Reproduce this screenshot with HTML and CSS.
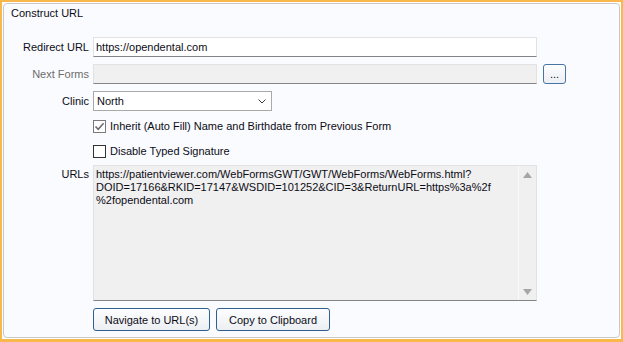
FILE: index.html
```html
<!DOCTYPE html>
<html>
<head>
<meta charset="utf-8">
<link rel="stylesheet" href="styles.css">
</head>
<body>
<div class="frame">
  <div class="panel">
    <div class="title">Construct URL</div>
    <div class="form">
      <div class="row row-redirect">
        <span class="lbl">Redirect URL</span>
        <div class="input">https://opendental.com</div>
      </div>
      <div class="row row-next">
        <span class="lbl lbl-dis">Next Forms</span>
        <div class="input input-dis"></div>
        <button class="btn btn-dots">...</button>
      </div>
      <div class="row row-clinic">
        <span class="lbl">Clinic</span>
        <div class="combo">
          <span class="combo-val">North</span>
          <svg class="chev" width="8" height="5" viewBox="0 0 8 5"><path d="M0.5 0.5 L4 4 L7.5 0.5" fill="none" stroke="#3a3a3a" stroke-width="1"/></svg>
        </div>
      </div>
      <div class="row row-check1">
        <span class="lbl"></span>
        <span class="box box-checked">
          <svg width="11" height="11" viewBox="0 0 11 11"><path d="M1.5 5.5 L4.2 8.3 L9.6 2.2" fill="none" stroke="#6a6a6a" stroke-width="1.5"/></svg>
        </span>
        <span class="check-text">Inherit (Auto Fill) Name and Birthdate from Previous Form</span>
      </div>
      <div class="row row-check2">
        <span class="lbl"></span>
        <span class="box"></span>
        <span class="check-text">Disable Typed Signature</span>
      </div>
      <div class="row row-urls">
        <span class="lbl lbl-top">URLs</span>
        <div class="textarea">
          <div class="ta-text">https://patientviewer.com/WebFormsGWT/GWT/WebForms/WebForms.html?<br>DOID=17166&amp;RKID=17147&amp;WSDID=101252&amp;CID=3&amp;ReturnURL=https%3a%2f<br>%2fopendental.com</div>
          <div class="scroll">
            <div class="sarrow"><svg width="9" height="6" viewBox="0 0 9 6"><path d="M4.5 0 L9 6 L0 6 Z" fill="#a6a6a6"/></svg></div>
            <div class="sarrow"><svg width="9" height="6" viewBox="0 0 9 6"><path d="M0 0 L9 0 L4.5 6 Z" fill="#a6a6a6"/></svg></div>
          </div>
        </div>
      </div>
      <div class="row row-buttons">
        <button class="btn btn-nav">Navigate to URL(s)</button>
        <button class="btn btn-copy">Copy to Clipboard</button>
      </div>
    </div>
  </div>
</div>
</body>
</html>
```
FILE: styles.css
```css
* { box-sizing: border-box; }
html, body { margin: 0; padding: 0; }
body {
  width: 623px;
  height: 342px;
  font-family: "Liberation Sans", Arial, sans-serif;
  font-size: 11px;
  color: #0c0c16;
  background: #ffffff;
  overflow: hidden;
}
.frame {
  width: 623px;
  height: 342px;
  border: 2px solid #f9b84c;
  border-bottom-width: 3px;
  padding: 1px;
  display: flex;
  background: #ffffff;
}
.panel {
  flex: 1;
  border: 1px solid #c8c8c8;
  border-radius: 4px;
  background: #fafbfe;
  display: flex;
  flex-direction: column;
}
.title {
  margin-top: 3px;
  padding-left: 7px;
  line-height: 13px;
}
.form {
  display: flex;
  flex-direction: column;
  margin-top: 17px;
}
.row {
  display: flex;
  align-items: center;
}
.lbl {
  width: 85px;
  margin-right: 4px;
  text-align: right;
  flex: none;
  line-height: 13px;
}
.lbl-dis { color: #6d6d6d; }
.lbl-top { align-self: flex-start; margin-top: 3px; }
.input {
  width: 444px;
  height: 20px;
  border: 1px solid #e2e2e2;
  border-bottom-color: #858585;
  background: #ffffff;
  padding: 0 2px;
  line-height: 18px;
}
.input-dis { background: #f0f0f0; }
.row-next { margin-top: 7px; }
.btn {
  font-family: "Liberation Sans", Arial, sans-serif;
  font-size: 11px;
  color: #0c0c16;
  border: 1px solid #2f5f8e;
  border-radius: 3px;
  background: linear-gradient(#fdfdfe, #eceff3);
  padding: 0;
  margin: 0;
}
.btn-dots {
  width: 23px;
  height: 20px;
  margin-left: 6px;
  border-color: #4475a4;
  line-height: 16px;
}
.row-clinic { margin-top: 7px; }
.combo {
  width: 179px;
  height: 20px;
  border: 1px solid #a9a9a9;
  background: #ffffff;
  display: flex;
  align-items: center;
  justify-content: space-between;
  padding: 0 5px 0 3px;
}
.chev { display: block; }
.row-check1 { margin-top: 9px; }
.row-check2 { margin-top: 12px; }
.box {
  width: 13px;
  height: 13px;
  border: 1px solid #333333;
  background: #ffffff;
  flex: none;
  display: flex;
  align-items: center;
  justify-content: center;
}
.box-checked { border-color: #7a7a7a; }
.box svg { display: block; }
.check-text {
  margin-left: 4px;
  line-height: 13px;
}
.row-urls { margin-top: 7px; align-items: flex-start; }
.textarea {
  width: 444px;
  height: 136px;
  border: 1px solid #e2e2e2;
  border-bottom-color: #858585;
  background: #f0f0f0;
  display: flex;
}
.ta-text {
  flex: 1;
  padding: 2px 0 0 2px;
  line-height: 13px;
  white-space: nowrap;
}
.scroll {
  width: 18px;
  border-left: 1px solid #fbfbfb;
  background: #f0f0f0;
  display: flex;
  flex-direction: column;
  justify-content: space-between;
}
.sarrow {
  height: 17px;
  display: flex;
  align-items: center;
  justify-content: center;
}
.sarrow svg { display: block; }
.row-buttons {
  margin-top: 7px;
  padding-left: 89px;
  gap: 6px;
}
.btn-nav { width: 117px; height: 23px; }
.btn-copy { width: 114px; height: 23px; }
```
